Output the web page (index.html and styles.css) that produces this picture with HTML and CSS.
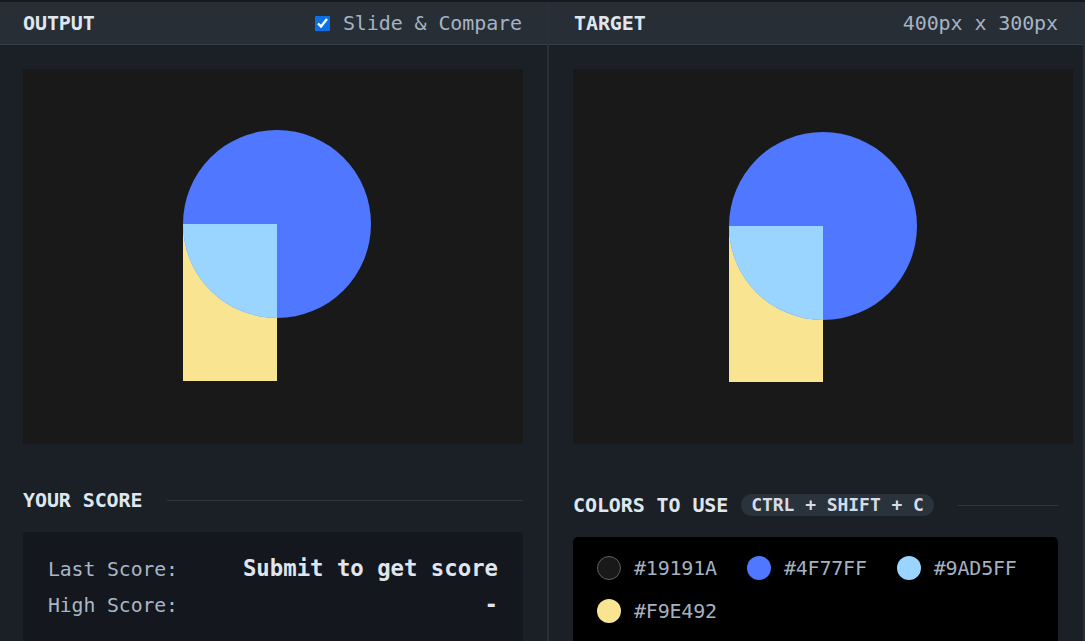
FILE: index.html
```html
<!DOCTYPE html>
<html>
<head>
<meta charset="utf-8">
<link rel="stylesheet" href="styles.css">
</head>
<body>
<div class="app">
  <section class="panel panel-left">
    <header class="bar">
      <span class="bar-title">OUTPUT</span>
      <label class="toggle"><input type="checkbox" checked class="check"><span>Slide &amp; Compare</span></label>
    </header>
    <div class="body">
      <div class="canvas">
        <div class="shape rect r-out"></div>
        <div class="shape circle c-out"></div>
        <div class="shape quarter q-out"></div>
      </div>
      <div class="section-head sh-left">
        <h2 class="section-title">YOUR SCORE</h2>
        <div class="rule"></div>
      </div>
      <div class="score-box">
        <div class="score-row"><span class="label">Last Score:</span><span class="value">Submit to get score</span></div>
        <div class="score-row"><span class="label">High Score:</span><span class="value">-</span></div>
      </div>
    </div>
  </section>
  <section class="panel panel-right">
    <header class="bar">
      <span class="bar-title">TARGET</span>
      <span class="dims">400px x 300px</span>
    </header>
    <div class="body">
      <div class="canvas">
        <div class="shape rect r-tgt"></div>
        <div class="shape circle c-tgt"></div>
        <div class="shape quarter q-tgt"></div>
      </div>
      <div class="section-head sh-right">
        <h2 class="section-title">COLORS TO USE</h2>
        <span class="pill">CTRL + SHIFT + C</span>
        <div class="rule"></div>
      </div>
      <div class="colors-box">
        <div class="swatch"><span class="dot dot-dark"></span><span class="hex">#19191A</span></div>
        <div class="swatch"><span class="dot dot-blue"></span><span class="hex">#4F77FF</span></div>
        <div class="swatch"><span class="dot dot-light"></span><span class="hex">#9AD5FF</span></div>
        <div class="swatch"><span class="dot dot-yellow"></span><span class="hex">#F9E492</span></div>
      </div>
    </div>
  </section>
</div>
</body>
</html>
```
FILE: styles.css
```css
* { box-sizing: border-box; }
html, body {
  margin: 0;
  padding: 0;
  background: #1b1f26;
  overflow: hidden;
}
body {
  font-family: "DejaVu Sans Mono", "Liberation Mono", monospace;
  color: #dfe6ee;
  width: 1085px;
  height: 641px;
}
.app {
  display: grid;
  grid-template-columns: 549px 536px;
  height: 641px;
  border-top: 2px solid #161a1f;
}
.panel {
  display: flex;
  flex-direction: column;
  border-right: 2px solid #2a3039;
  min-width: 0;
}
.bar {
  height: 43px;
  background: #272e36;
  border-bottom: 1px solid #353d47;
  display: flex;
  align-items: center;
  justify-content: space-between;
  padding: 0 25px 0 23px;
}
.panel-right .bar { padding-left: 25px; padding-right: 25px; }
.bar-title {
  font-weight: bold;
  font-size: 20px;
  letter-spacing: -0.1px;
}
.toggle {
  display: flex;
  align-items: center;
  gap: 13px;
  font-size: 20px;
  color: #a6b3c3;
  letter-spacing: -0.1px;
}
.check {
  margin: 0;
  width: 15px;
  height: 15px;
  accent-color: #0b6fe6;
}
.dims {
  font-size: 20px;
  color: #a6b3c3;
  letter-spacing: -0.1px;
}
.body {
  padding: 24px 0 0 23px;
  display: flex;
  flex-direction: column;
}
.panel-right .body { padding-left: 24px; }
.canvas {
  position: relative;
  width: 500px;
  height: 375px;
  background: #19191a;
  overflow: hidden;
  flex: none;
}
.shape { position: absolute; }
.rect { background: #f9e492; width: 94px; height: 156px; }
.circle { background: #4f77ff; width: 188px; height: 188px; border-radius: 50%; }
.quarter { background: #9ad5ff; width: 94px; height: 94px; border-bottom-left-radius: 94px; }
.r-out { left: 160px; top: 156px; }
.c-out { left: 160px; top: 61px; }
.q-out { left: 160px; top: 155px; }
.r-tgt { left: 156px; top: 157px; }
.c-tgt { left: 156px; top: 63px; }
.q-tgt { left: 156px; top: 157px; }

.section-head {
  display: flex;
  align-items: center;
  width: 500px;
}
.sh-left { margin-top: 43px; height: 26px; }
.sh-right { margin-top: 48px; height: 26px; width: 485px; }
.section-title {
  margin: 0;
  font-size: 20px;
  font-weight: bold;
  letter-spacing: -0.1px;
  color: #dfe6ee;
  white-space: nowrap;
}
.rule {
  flex: 1;
  height: 1px;
  background: #2f3640;
  margin-left: 25px;
}
.sh-right .rule { margin-left: 24px; }
.pill {
  margin-left: 13px;
  background: #2a323c;
  color: #d5dce6;
  font-size: 18px;
  font-weight: bold;
  letter-spacing: -0.05px;
  height: 22px;
  line-height: 22px;
  padding: 0 10px;
  border-radius: 11px;
  white-space: nowrap;
}
.score-box {
  margin-top: 19px;
  width: 500px;
  height: 120px;
  background: #14181e;
  border-radius: 4px;
  padding: 23px 25px 0 25px;
  display: flex;
  flex-direction: column;
  gap: 8px;
}
.score-row {
  display: flex;
  justify-content: space-between;
  align-items: baseline;
  height: 28px;
}
.label {
  font-size: 19.8px;
  color: #aab6c6;
  letter-spacing: -0.1px;
}
.value {
  font-size: 22.3px;
  font-weight: bold;
  color: #e0e6f0;
  letter-spacing: 0px;
}
.colors-box {
  margin-top: 19px;
  width: 485px;
  height: 120px;
  background: #000000;
  border-radius: 5px;
  padding: 19px 20px 0 24px;
  display: flex;
  flex-wrap: wrap;
  column-gap: 30px;
  row-gap: 19px;
  align-content: flex-start;
}
.swatch {
  display: flex;
  align-items: center;
  gap: 13px;
  height: 24px;
}
.dot {
  width: 24px;
  height: 24px;
  border-radius: 50%;
  flex: none;
}
.dot-dark { background: #19191a; border: 1px solid #5c5f66; }
.dot-blue { background: #4f77ff; }
.dot-light { background: #9ad5ff; }
.dot-yellow { background: #f9e492; }
.hex {
  font-size: 20px;
  color: #a5b1c2;
  letter-spacing: -0.2px;
}
```
